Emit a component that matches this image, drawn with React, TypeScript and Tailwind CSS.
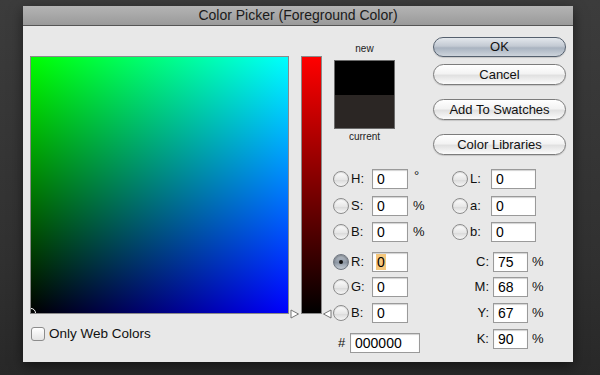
import React from "react";

const font = "font-['Liberation_Sans',Arial,sans-serif]";

function Radio({ checked }: { checked?: boolean }) {
  return (
    <span
      className={
        checked
          ? "flex h-[16px] w-[16px] shrink-0 items-center justify-center rounded-full border border-[#6f7680] bg-[linear-gradient(to_bottom,#b9c0c9,#8e98a5_55%,#c9d0d8)] shadow-[inset_0_1px_2px_rgba(0,0,0,0.35)]"
          : "flex h-[16px] w-[16px] shrink-0 items-center justify-center rounded-full border border-[#8c8c8c] bg-[linear-gradient(to_bottom,#fdfdfd,#e6e6e6_55%,#d9d9d9_56%,#f6f6f6)] shadow-[inset_0_1px_1px_rgba(0,0,0,0.12)]"
      }
    >
      {checked && <span className="h-[4px] w-[4px] rounded-full bg-[#111111]" />}
    </span>
  );
}

function Box({ value, className, highlight }: { value: string; className: string; highlight?: boolean }) {
  return (
    <div
      className={
        "flex h-[20px] shrink-0 items-center border border-[#9a9a9a] bg-white pl-[3px] text-[14px] leading-none text-black shadow-[inset_0_1px_1px_rgba(0,0,0,0.18)] " +
        className
      }
    >
      {highlight ? (
        <span className="flex h-[16px] items-center bg-[#f5c77c] px-[1px]">{value}</span>
      ) : (
        <span className="pl-[1px]">{value}</span>
      )}
    </div>
  );
}

function LeftRow({ label, value, unit, checked, highlight, mt }: { label: string; value: string; unit?: string; checked?: boolean; highlight?: boolean; mt: string }) {
  return (
    <div className={"flex h-[20px] items-center " + mt}>
      <Radio checked={checked} />
      <span className="w-[23px] pl-[2px] text-[13px] text-[#111111]">{label}</span>
      <Box value={value} className="w-[36px]" highlight={highlight} />
      {unit && (
        <span className={unit === "°" ? "ml-[6px] self-start text-[13px] leading-[14px] text-[#111111]" : "ml-[5px] text-[13px] text-[#111111]"}>{unit}</span>
      )}
    </div>
  );
}

function LabRow({ label, mt }: { label: string; mt: string }) {
  return (
    <div className={"flex h-[20px] items-center " + mt}>
      <Radio />
      <span className="w-[23px] pl-[2px] text-[13px] text-[#111111]">{label}</span>
      <Box value="0" className="w-[45px]" />
    </div>
  );
}

function CmykRow({ label, value, mt }: { label: string; value: string; mt: string }) {
  return (
    <div className={"flex h-[20px] items-center " + mt}>
      <span className="w-[37px] text-right text-[13px] text-[#111111]">{label}</span>
      <Box value={value} className="ml-[4px] w-[35px]" />
      <span className="ml-[4px] text-[13px] text-[#111111]">%</span>
    </div>
  );
}

function Button({ children, primary, className }: { children: React.ReactNode; primary?: boolean; className: string }) {
  return (
    <div
      className={
        (primary
          ? "border-[#55606e] bg-[linear-gradient(to_bottom,#e3e7ec,#c3cad3_45%,#a9b3c0_55%,#cdd4dc)] "
          : "border-[#7c7c7c] bg-[linear-gradient(to_bottom,#ffffff,#f3f3f3_45%,#e1e1e1_55%,#fbfbfb)] ") +
        "flex w-[133px] items-center justify-center rounded-full border text-[13px] text-[#111111] shadow-[0_1px_1px_rgba(0,0,0,0.15)] " +
        className
      }
    >
      {children}
    </div>
  );
}

export default function App() {
  return (
    <div className={"h-[375px] w-[600px] overflow-hidden bg-[linear-gradient(to_bottom,#3c3c3c,#303030_70%,#282828)] pt-[6px] " + font}>
      <div className="ml-[23px] flex h-[356px] w-[550px] flex-col bg-[#e8e8e8] shadow-[0_4px_12px_rgba(0,0,0,0.5)]">
        {/* title bar */}
        <div className="h-[20px] border-b border-[#555555] bg-[linear-gradient(to_bottom,#b4b4b4,#9a9a9a)] text-center text-[14px] leading-[19px] text-[#1a1a1a]">
          Color Picker (Foreground Color)
        </div>

        <div className="flex flex-1 pl-[7px]">
          {/* color field */}
          <div className="w-[259px] pt-[30px]">
            <div className="relative h-[258px] w-[259px] overflow-hidden border border-[#8a8a8a] bg-[linear-gradient(to_bottom,#00ff00,#000000),linear-gradient(to_right,#000000,#0000ff)] bg-blend-screen">
              <div className="absolute bottom-[-5px] left-[-5px] h-[10px] w-[10px] rounded-full border border-white" />
            </div>
            <div className="mt-[10px] flex items-center">
              <span className="ml-[1px] h-[14px] w-[14px] rounded-[3px] border border-[#8c8c8c] bg-[linear-gradient(to_bottom,#ffffff,#e4e4e4)]" />
              <span className="ml-[4px] text-[13.5px] text-[#111111]">Only Web Colors</span>
            </div>
          </div>

          {/* slider */}
          <div className="ml-[12px] pt-[30px]">
            <div className="relative h-[258px] w-[21px] border border-[#8a8a8a] bg-[linear-gradient(to_bottom,#ff0000,#000000)]">
              <svg className="absolute left-[-12px] top-[252px]" width="10" height="10" viewBox="0 0 10 10">
                <path d="M1 1 L8.5 5 L1 9 Z" fill="#ffffff" stroke="#777777" strokeWidth="1" />
              </svg>
              <svg className="absolute right-[-11px] top-[252px]" width="10" height="10" viewBox="0 0 10 10">
                <path d="M9 1 L1.5 5 L9 9 Z" fill="#ffffff" stroke="#777777" strokeWidth="1" />
              </svg>
            </div>
          </div>

          {/* right side */}
          <div className="ml-[11px] w-[233px] pt-[11px]">
            <div className="flex h-[118px]">
              <div className="ml-[1px] flex w-[61px] flex-col items-center">
                <span className="pt-[6px] text-[10px] leading-[12px] text-[#222222]">new</span>
                <div className="mt-[5px] flex h-[69px] w-[61px] flex-col border border-[#6a6a6a]">
                  <div className="flex-1 bg-black" />
                  <div className="flex-1 bg-[#2b2624]" />
                </div>
                <span className="mt-[2px] text-[10px] leading-[12px] text-[#222222]">current</span>
              </div>
              <div className="ml-auto flex flex-col">
                <Button primary className="h-[20px]">OK</Button>
                <Button className="mt-[7px] h-[21px]">Cancel</Button>
                <Button className="mt-[14px] h-[21px]">Add To Swatches</Button>
                <Button className="mt-[14px] h-[21px]">Color Libraries</Button>
              </div>
            </div>

            <div className="mt-[14px] flex">
              <div className="w-[119px]">
                <LeftRow label="H:" value="0" unit="°" mt="" />
                <LeftRow label="S:" value="0" unit="%" mt="mt-[7px]" />
                <LeftRow label="B:" value="0" unit="%" mt="mt-[6px]" />
                <LeftRow label="R:" value="0" checked highlight mt="mt-[10px]" />
                <LeftRow label="G:" value="0" mt="mt-[5px]" />
                <LeftRow label="B:" value="0" mt="mt-[6px]" />
                <div className="mt-[10px] flex h-[20px] items-center">
                  <span className="w-[17px] pl-[5px] text-[13px] text-[#111111]">#</span>
                  <Box value="000000" className="w-[70px]" />
                </div>
              </div>
              <div>
                <LabRow label="L:" mt="" />
                <LabRow label="a:" mt="mt-[7px]" />
                <LabRow label="b:" mt="mt-[6px]" />
                <CmykRow label="C:" value="75" mt="mt-[10px]" />
                <CmykRow label="M:" value="68" mt="mt-[5px]" />
                <CmykRow label="Y:" value="67" mt="mt-[6px]" />
                <CmykRow label="K:" value="90" mt="mt-[6px]" />
              </div>
            </div>
          </div>
        </div>
      </div>
    </div>
  );
}
